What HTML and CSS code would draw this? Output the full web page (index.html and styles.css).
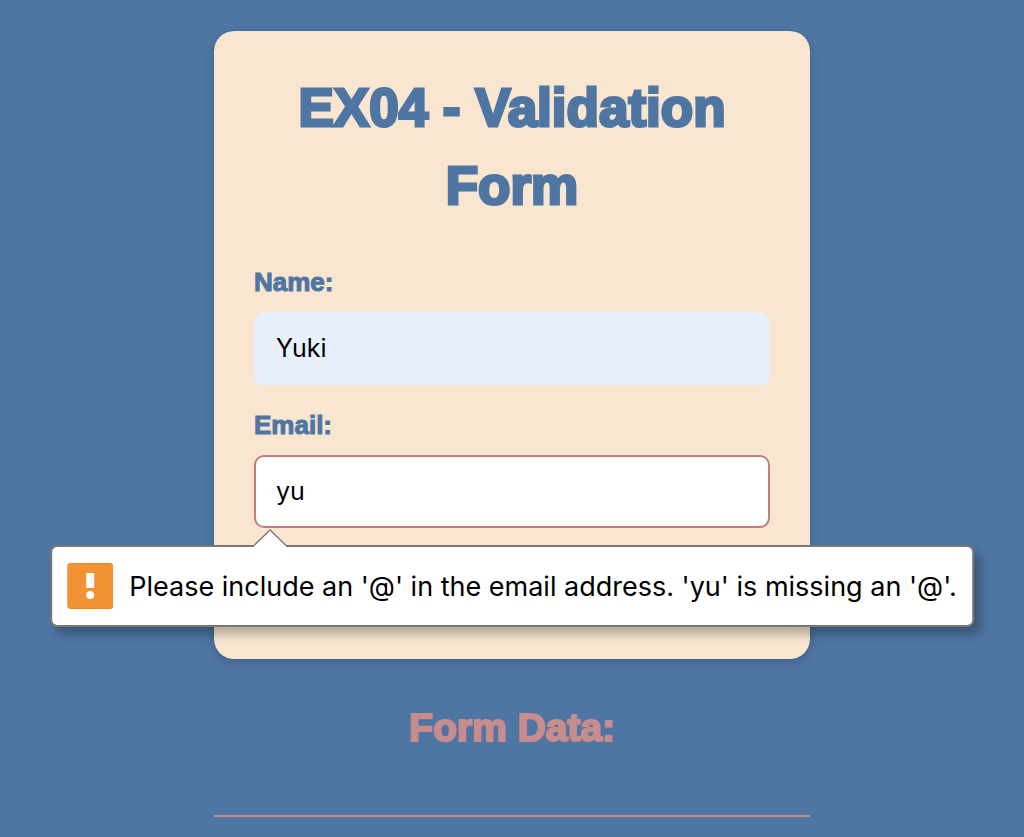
FILE: index.html
```html
<!DOCTYPE html>
<html lang="en">
<head>
<meta charset="utf-8">
<meta name="viewport" content="width=device-width, initial-scale=1">
<title>EX04 - Validation Form</title>
<link rel="stylesheet" href="styles.css">
</head>
<body>
<main class="page">
  <form class="card" novalidate>
    <h1 class="title">EX04 - Validation Form</h1>
    <div class="field">
      <label class="label" for="name">Name:</label>
      <input class="input input-filled" id="name" type="text" value="Yuki">
    </div>
    <div class="field">
      <label class="label" for="email">Email:</label>
      <input class="input input-invalid" id="email" type="email" value="yu" aria-describedby="email-error">
      <div class="bubble" id="email-error" role="alert">
        <svg class="bubble-icon" viewBox="0 0 46 46" aria-hidden="true">
          <rect x="0.5" y="0.5" width="45" height="45" rx="2.5" fill="#f19335" stroke="#ef8a1c"/>
          <rect x="19" y="10" width="8" height="15" fill="#fff"/>
          <circle cx="23" cy="32" r="4" fill="#fff"/>
        </svg>
        <span>Please include an '@' in the email address. 'yu' is missing an '@'.</span>
      </div>
      <svg class="bubble-arrow" viewBox="0 0 32 18" aria-hidden="true">
        <path d="M0 16.5 L16 1 L32 16.5 V18 H0Z" fill="#fff"/>
        <path d="M0 16.5 L16 1 L32 16.5" fill="none" stroke="#777" stroke-width="1.3"/>
      </svg>
    </div>
  </form>
  <section class="results">
    <h2 class="results-title">Form Data:</h2>
  </section>
</main>
</body>
</html>
```
FILE: styles.css
```css
* {
  box-sizing: border-box;
}

body {
  margin: 0;
  background: #4f75a2;
  color: #4f75a2;
  font-family: "Liberation Sans", Arial, sans-serif;
}

.page {
  display: flex;
  flex-direction: column;
  gap: 40px;
  max-width: 596px;
  margin: 0 auto;
  padding: 31px 0 20px;
}

.card {
  display: flex;
  flex-direction: column;
  gap: 21px;
  padding: 38px 40px 131px;
  border-radius: 20px;
  background: #f8e6d1;
  box-shadow: 0 0 1px #005088, 0 4px 12px rgba(0, 0, 0, 0.15);
}

.title,
.results-title,
.label {
  font-weight: bold;
  line-height: 1.5;
  stroke-linejoin: round;
}

.title {
  margin: 0 0 17px;
  font-size: 53px;
  line-height: 78px;
  text-align: center;
  -webkit-text-stroke: 3px currentColor;
}

.field {
  display: flex;
  flex-direction: column;
  gap: 10px;
  position: relative;
}

.label {
  font-size: 26px;
  -webkit-text-stroke: 1px currentColor;
}

.input {
  width: 100%;
  padding: 20px;
  border: 2px solid #e8effd;
  border-radius: 10px;
  outline: none;
  background: #fff;
  color: #000;
  font-family: Inter, sans-serif;
  font-size: 25px;
  line-height: 29px;
}

.input-filled {
  background: #e8effd;
}

.input-invalid {
  border-color: #c07e80;
}

.bubble {
  position: absolute;
  top: calc(100% + 17px);
  left: 50%;
  transform: translateX(-50%);
  display: flex;
  align-items: center;
  gap: 16px;
  padding: 16px 15px;
  border: 2px solid #777;
  border-radius: 7px;
  background: #fff;
  box-shadow: 6px 8px 10px rgba(0, 0, 0, 0.25);
  color: #000;
  font-family: Inter, sans-serif;
  font-size: 27px;
  white-space: nowrap;
}

.bubble-icon {
  flex: none;
  width: 46px;
  height: 46px;
}

.bubble-arrow {
  position: absolute;
  top: calc(100% + 1px);
  left: 0;
  width: 32px;
  height: 18px;
}

.results {
  padding-bottom: 57px;
  border-bottom: 2px solid #c78c8c;
}

.results-title {
  margin: 0;
  color: #c78c8c;
  font-size: 39px;
  text-align: center;
  -webkit-text-stroke: 2px currentColor;
}
```
